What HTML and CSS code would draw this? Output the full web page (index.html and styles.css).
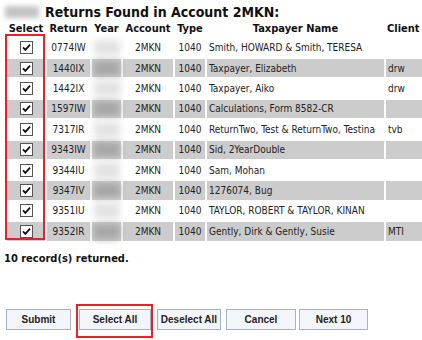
FILE: index.html
```html
<!DOCTYPE html>
<html lang="en">
<head>
    <meta charset="UTF-8">
    <title>Returns Found</title>
    <link rel="stylesheet" href="styles.css">
</head>
<body>
    <h1 class="title"><span class="blur-name"></span>Returns Found in Account 2MKN:</h1>

    <div class="results">
        <table class="returns">
            <colgroup>
                <col class="c-select">
                <col class="c-return">
                <col class="c-year">
                <col class="c-account">
                <col class="c-type">
                <col class="c-name">
                <col class="c-client">
            </colgroup>
            <thead>
                <tr>
                    <th>Select</th>
                    <th>Return</th>
                    <th>Year</th>
                    <th>Account</th>
                    <th>Type</th>
                    <th>Taxpayer Name</th>
                    <th class="left">Client</th>
                </tr>
            </thead>
            <tbody id="rows"></tbody>
        </table>
        <!-- red highlight drawn over the select column -->
        <div class="mark-select"></div>
    </div>

    <p class="count">10 record(s) returned.</p>

    <div class="actions">
        <button class="btn w-submit">Submit</button>
        <span class="mark-btn"><button class="btn w-selall">Select All</button></span>
        <button class="btn w-desel">Deselect All</button>
        <button class="btn w-cancel">Cancel</button>
        <button class="btn w-next">Next 10</button>
    </div>

    <script>
        const returns = [
            ['0774IW', 'Smith, HOWARD & Smith, TERESA', ''],
            ['1440IX', 'Taxpayer, Elizabeth', 'drw'],
            ['1442IX', 'Taxpayer, Aiko', 'drw'],
            ['1597IW', 'Calculations, Form 8582-CR', ''],
            ['7317IR', 'ReturnTwo, Test & ReturnTwo, Testina', 'tvb'],
            ['9343IW', 'Sid, 2YearDouble', ''],
            ['9344IU', 'Sam, Mohan', ''],
            ['9347IV', '1276074, Bug', ''],
            ['9351IU', 'TAYLOR, ROBERT & TAYLOR, KINAN', ''],
            ['9352IR', 'Gently, Dirk & Gently, Susie', 'MTI']
        ];

        const check = '<svg class="box" width="13" height="13" viewBox="0 0 13 13">' +
            '<rect x="0.5" y="0.5" width="12" height="12" fill="#fff" stroke="#555"/>' +
            '<path d="M3 6.3 L5.4 8.8 L10 3.6" fill="none" stroke="#111" stroke-width="1.8"/></svg>';

        const body = document.getElementById('rows');
        returns.forEach((r, i) => {
            const tr = document.createElement('tr');
            if (i % 2 === 1) tr.className = 'alt';
            tr.innerHTML =
                '<td class="center">' + check + '</td>' +
                '<td class="center">' + r[0] + '</td>' +
                '<td><span class="blur-year"></span></td>' +
                '<td class="center">2MKN</td>' +
                '<td class="center">1040</td>' +
                '<td class="name"></td>' +
                '<td class="name"></td>';
            tr.children[5].textContent = r[1];
            tr.children[6].textContent = r[2];
            body.appendChild(tr);
        });
    </script>
</body>
</html>
```

FILE: styles.css
```css
* {
    box-sizing: border-box;
}

body {
    margin: 0;
    padding: 0 0 0 5px;
    width: 422px;
    height: 340px;
    overflow: hidden;
    background-color: #fff;
    color: #222;
    font-family: 'DejaVu Sans Condensed', 'DejaVu Sans', sans-serif;
    font-size: 10px;
}

.title {
    display: flex;
    align-items: center;
    margin: 0 0 0 -2px;
    height: 21px;
    padding-top: 2px;
    font-size: 14px;
    font-weight: bold;
    color: #111;
    white-space: nowrap;
}

.blur-name {
    display: inline-block;
    width: 34px;
    height: 12px;
    margin: 0 6px 0 2px;
    background-color: #c4c4c4;
    filter: blur(2.5px);
}

.results {
    position: relative;
}

.returns {
    table-layout: fixed;
    width: 433px;
    border-collapse: separate;
    border-spacing: 2px;
    margin: -2px 0 0 0;
}

.c-select { width: 38px; }
.c-return { width: 43px; }
.c-year { width: 29px; }
.c-account { width: 50px; }
.c-type { width: 30px; }
.c-name { width: 177px; }
.c-client { width: 50px; }

.returns th {
    height: 15.6px;
    padding: 0;
    font-size: 11px;
    font-weight: bold;
    color: #111;
    text-align: center;
    white-space: nowrap;
}

.returns th.left {
    text-align: left;
    padding-left: 1px;
}

.returns td {
    height: 18.4px;
    padding: 0 2px;
    white-space: nowrap;
    overflow: hidden;
    vertical-align: middle;
}

.returns tr.alt td {
    background-color: #cccccc;
}

.center {
    text-align: center;
}

.name {
    padding-left: 3px;
}

.box {
    display: block;
    margin: 0 auto;
}

.blur-year {
    display: block;
    width: 26px;
    height: 15px;
    margin: 0 auto;
    background-color: #e2e2e2;
    filter: blur(3.5px);
}

.alt .blur-year {
    background-color: #a6a6a6;
}

.returns td:nth-child(3) {
    overflow: visible;
}

.mark-select {
    position: absolute;
    left: 0;
    top: 15px;
    width: 40px;
    height: 206px;
    border: 2px solid #e8202a;
}

.count {
    margin: 9px 0 0 -1px;
    font-size: 11px;
    font-weight: bold;
    color: #111;
}

.actions {
    display: flex;
    align-items: flex-start;
    margin-top: 44px;
    margin-left: 1px;
}

.btn {
    height: 21px;
    padding: 0;
    background-color: #f3f5fa;
    border: 1px solid #a9b0bf;
    border-radius: 0;
    font-family: 'Liberation Sans', Arial, sans-serif;
    font-size: 10px;
    font-weight: bold;
    color: #222;
}

.mark-btn {
    display: block;
    margin: -5px 4px 0 5px;
    padding: 3px 0 6px 1px;
    width: 77px;
    border: 2px solid #e8202a;
}

.w-submit { width: 65px; }
.w-selall { width: 72px; }
.w-desel { width: 64px; }
.w-cancel { width: 70px; margin-left: 5px; }
.w-next { width: 69px; margin-left: 3px; }
```
